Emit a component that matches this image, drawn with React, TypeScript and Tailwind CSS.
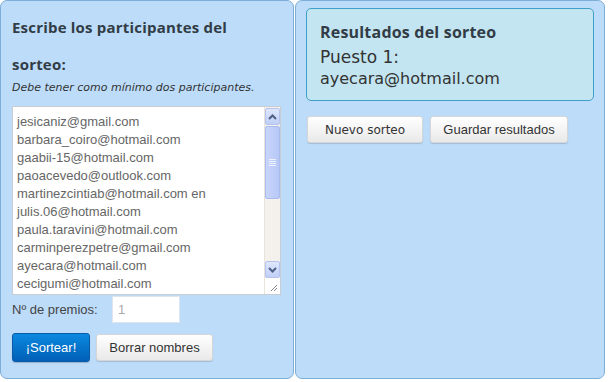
import React from "react";

const emails = [
  "jesicaniz@gmail.com",
  "barbara_coiro@hotmail.com",
  "gaabii-15@hotmail.com",
  "paoacevedo@outlook.com",
  "martinezcintiab@hotmail.com en",
  "julis.06@hotmail.com",
  "paula.taravini@hotmail.com",
  "carminperezpetre@gmail.com",
  "ayecara@hotmail.com",
  "cecigumi@hotmail.com",
];

function Scrollbar() {
  return (
    <div className="flex flex-col w-[16px] h-full bg-[#f4f1ec] border-l border-[#e8e4dc]">
      <div className="h-[17px] w-[15px] mx-auto mt-[1px] rounded-[2px] border border-[#b4c4ee] bg-gradient-to-b from-[#dfe7fd] to-[#c0cff7] flex items-center justify-center">
        <svg width="9" height="6" viewBox="0 0 9 6"><path d="M1 5 L4.5 1.5 L8 5" stroke="#4d6185" strokeWidth="2" fill="none" /></svg>
      </div>
      <div className="h-[73px] w-[15px] mx-auto mt-[1px] rounded-[2px] border border-[#a9bbef] bg-gradient-to-r from-[#c8d5fb] to-[#b7c8f6] flex flex-col items-center justify-center gap-[1px]">
        <div className="w-[7px] h-[1px] bg-[#eef2fe]" />
        <div className="w-[7px] h-[1px] bg-[#eef2fe]" />
        <div className="w-[7px] h-[1px] bg-[#eef2fe]" />
        <div className="w-[7px] h-[1px] bg-[#eef2fe]" />
      </div>
      <div className="flex-1" />
      <div className="h-[17px] w-[15px] mx-auto rounded-[2px] border border-[#b4c4ee] bg-gradient-to-b from-[#dfe7fd] to-[#c0cff7] flex items-center justify-center">
        <svg width="9" height="6" viewBox="0 0 9 6"><path d="M1 1 L4.5 4.5 L8 1" stroke="#4d6185" strokeWidth="2" fill="none" /></svg>
      </div>
      <div className="h-[16px] bg-white flex items-end justify-end pr-[2px] pb-[2px]">
        <svg width="9" height="9" viewBox="0 0 9 9"><path d="M8 2 L2 8 M8 5 L5 8" stroke="#888" strokeWidth="1" /></svg>
      </div>
    </div>
  );
}

export default function App() {
  return (
    <div className="w-[608px] h-[382px] bg-white flex gap-[1px]" style={{ fontFamily: '"Liberation Sans", Arial, sans-serif' }}>
      {/* Left panel */}
      <div className="w-[294px] h-[379px] bg-[#bcdcfa] border border-[#7eaed6] rounded-[7px] flex flex-col pl-[11px]">
        <div className="pt-[8px] text-[15px] font-bold leading-[37px] text-[#323c46] tracking-[0.2px]" style={{ fontFamily: '"Open Sans", sans-serif' }}>
          <div>Escribe los participantes del</div>
          <div>sorteo:</div>
        </div>
        <div className="text-[11px] italic leading-[12px] text-[#333] mt-[-1px]" style={{ fontFamily: '"DejaVu Sans", Verdana, sans-serif' }}>
          Debe tener como mínimo dos participantes.
        </div>
        <div className="mt-[12px] w-[269px] h-[189px] bg-white border border-[#c9cdd2] flex overflow-hidden">
          <div className="flex-1 pl-[4px] pt-[6px] text-[13px] leading-[18px] text-[#666] overflow-hidden">
            {emails.map((e) => (
              <div key={e} className="whitespace-nowrap">{e}</div>
            ))}
          </div>
          <Scrollbar />
        </div>
        <div className="flex items-center mt-[1px] h-[27px]">
          <div className="w-[100px] text-[13px] text-[#444]">Nº de premios:</div>
          <div className="w-[68px] h-[27px] bg-white border border-[#dde6ef] flex items-center pl-[5px] text-[13px] text-[#aaa]">1</div>
        </div>
        <div className="flex items-center gap-[6px] mt-[10px]">
          <div className="w-[78px] h-[29px] rounded-[3px] border border-[#0a5aa8] bg-gradient-to-b from-[#0d88e0] to-[#0060b6] text-white text-[13px] flex items-center justify-center shadow-[0_1px_1px_rgba(0,0,0,0.2)]">
            ¡Sortear!
          </div>
          <div className="w-[117px] h-[27px] rounded-[3px] border border-[#d6d6d6] bg-gradient-to-b from-white to-[#e9e9e9] text-[#333] text-[13px] flex items-center justify-center shadow-[0_1px_1px_rgba(0,0,0,0.15)]">
            Borrar nombres
          </div>
        </div>
      </div>
      {/* Right panel */}
      <div className="w-[310px] h-[379px] bg-[#bcdcfa] border border-[#7eaed6] rounded-[7px] flex flex-col pl-[10px]">
        <div className="mt-[7px] w-[288px] h-[93px] bg-[#c2e5f1] border border-[#3f9fc9] rounded-[5px] pl-[13px] pt-[12px]">
          <div className="text-[16px] font-bold leading-[22px] text-[#323c46] tracking-[0.2px]" style={{ fontFamily: '"Open Sans", sans-serif' }}>
            Resultados del sorteo
          </div>
          <div className="text-[17px] leading-[20px] text-[#333] mt-[4px]" style={{ fontFamily: '"DejaVu Sans", Verdana, sans-serif' }}>
            Puesto 1:
          </div>
          <div className="text-[16px] leading-[20px] text-[#333] mt-[2px]" style={{ fontFamily: '"DejaVu Sans", Verdana, sans-serif' }}>
            ayecara@hotmail.com
          </div>
        </div>
        <div className="flex gap-[7px] mt-[15px] ml-[1px]">
          <div className="w-[116px] h-[27px] rounded-[3px] border border-[#d6d6d6] bg-gradient-to-b from-white to-[#e9e9e9] text-[#333] text-[12px] flex items-center justify-center shadow-[0_1px_1px_rgba(0,0,0,0.15)]" style={{ fontFamily: '"DejaVu Sans", Verdana, sans-serif' }}>
            Nuevo sorteo
          </div>
          <div className="w-[138px] h-[27px] rounded-[3px] border border-[#d6d6d6] bg-gradient-to-b from-white to-[#e9e9e9] text-[#333] text-[13px] flex items-center justify-center shadow-[0_1px_1px_rgba(0,0,0,0.15)]">
            Guardar resultados
          </div>
        </div>
      </div>
    </div>
  );
}
